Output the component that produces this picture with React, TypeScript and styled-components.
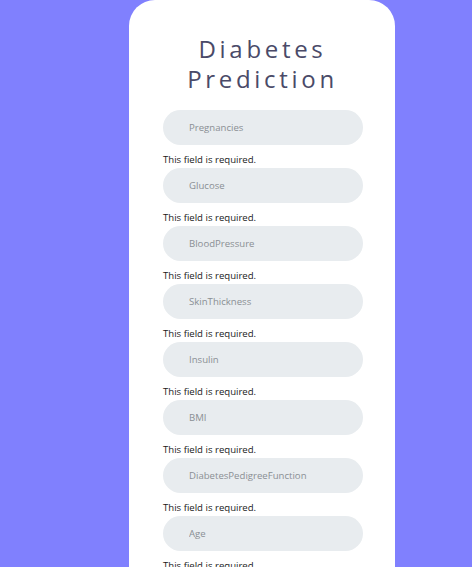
import React from "react";
import styled, { createGlobalStyle } from "styled-components";

const Global = createGlobalStyle`
  html, body { margin: 0; padding: 0; background: #8080fe; }
  body { font-family: "Open Sans", "Noto Sans", sans-serif; overflow: hidden; }
`;

const Page = styled.div`
  display: flex;
  justify-content: flex-start;
  padding-left: 129px;
`;

const Card = styled.form`
  width: 266px;
  box-sizing: border-box;
  background: #ffffff;
  border-radius: 26px;
  padding: 34px 33px 40px 34px;
  display: flex;
  flex-direction: column;
  align-items: stretch;
  min-height: 620px;
`;

const Title = styled.h1`
  margin: 0 0 16px;
  font-family: "Open Sans", sans-serif;
  font-weight: 400;
  font-size: 24px;
  line-height: 30px;
  letter-spacing: 3.7px;
  text-align: center;
  color: #4a4a68;
`;

const Field = styled.div`
  display: flex;
  flex-direction: column;
`;

const Input = styled.input`
  height: 35px;
  width: 200px;
  box-sizing: border-box;
  border: none;
  outline: none;
  border-radius: 18px;
  background: #e8ecef;
  padding: 0 0 0 26px;
  font-family: "Open Sans", sans-serif;
  font-size: 9.6px;
  color: #333;
  &::placeholder { color: #8a8f94; }
`;

const Error = styled.div`
  height: 23px;
  box-sizing: border-box;
  padding-top: 9px;
  font-size: 9.6px;
  line-height: 12px;
  color: #1a1a1a;
`;

const fields = [
  "Pregnancies",
  "Glucose",
  "BloodPressure",
  "SkinThickness",
  "Insulin",
  "BMI",
  "DiabetesPedigreeFunction",
  "Age",
];

export default function App() {
  return (
    <>
      <Global />
      <Page>
        <Card onSubmit={(e) => e.preventDefault()}>
          <Title>
            Diabetes
            <br />
            Prediction
          </Title>
          {fields.map((f, i) => (
            <Field key={f}>
              <Input placeholder={f} autoFocus={i === 0} />
              <Error>This field is required.</Error>
            </Field>
          ))}
        </Card>
      </Page>
    </>
  );
}
